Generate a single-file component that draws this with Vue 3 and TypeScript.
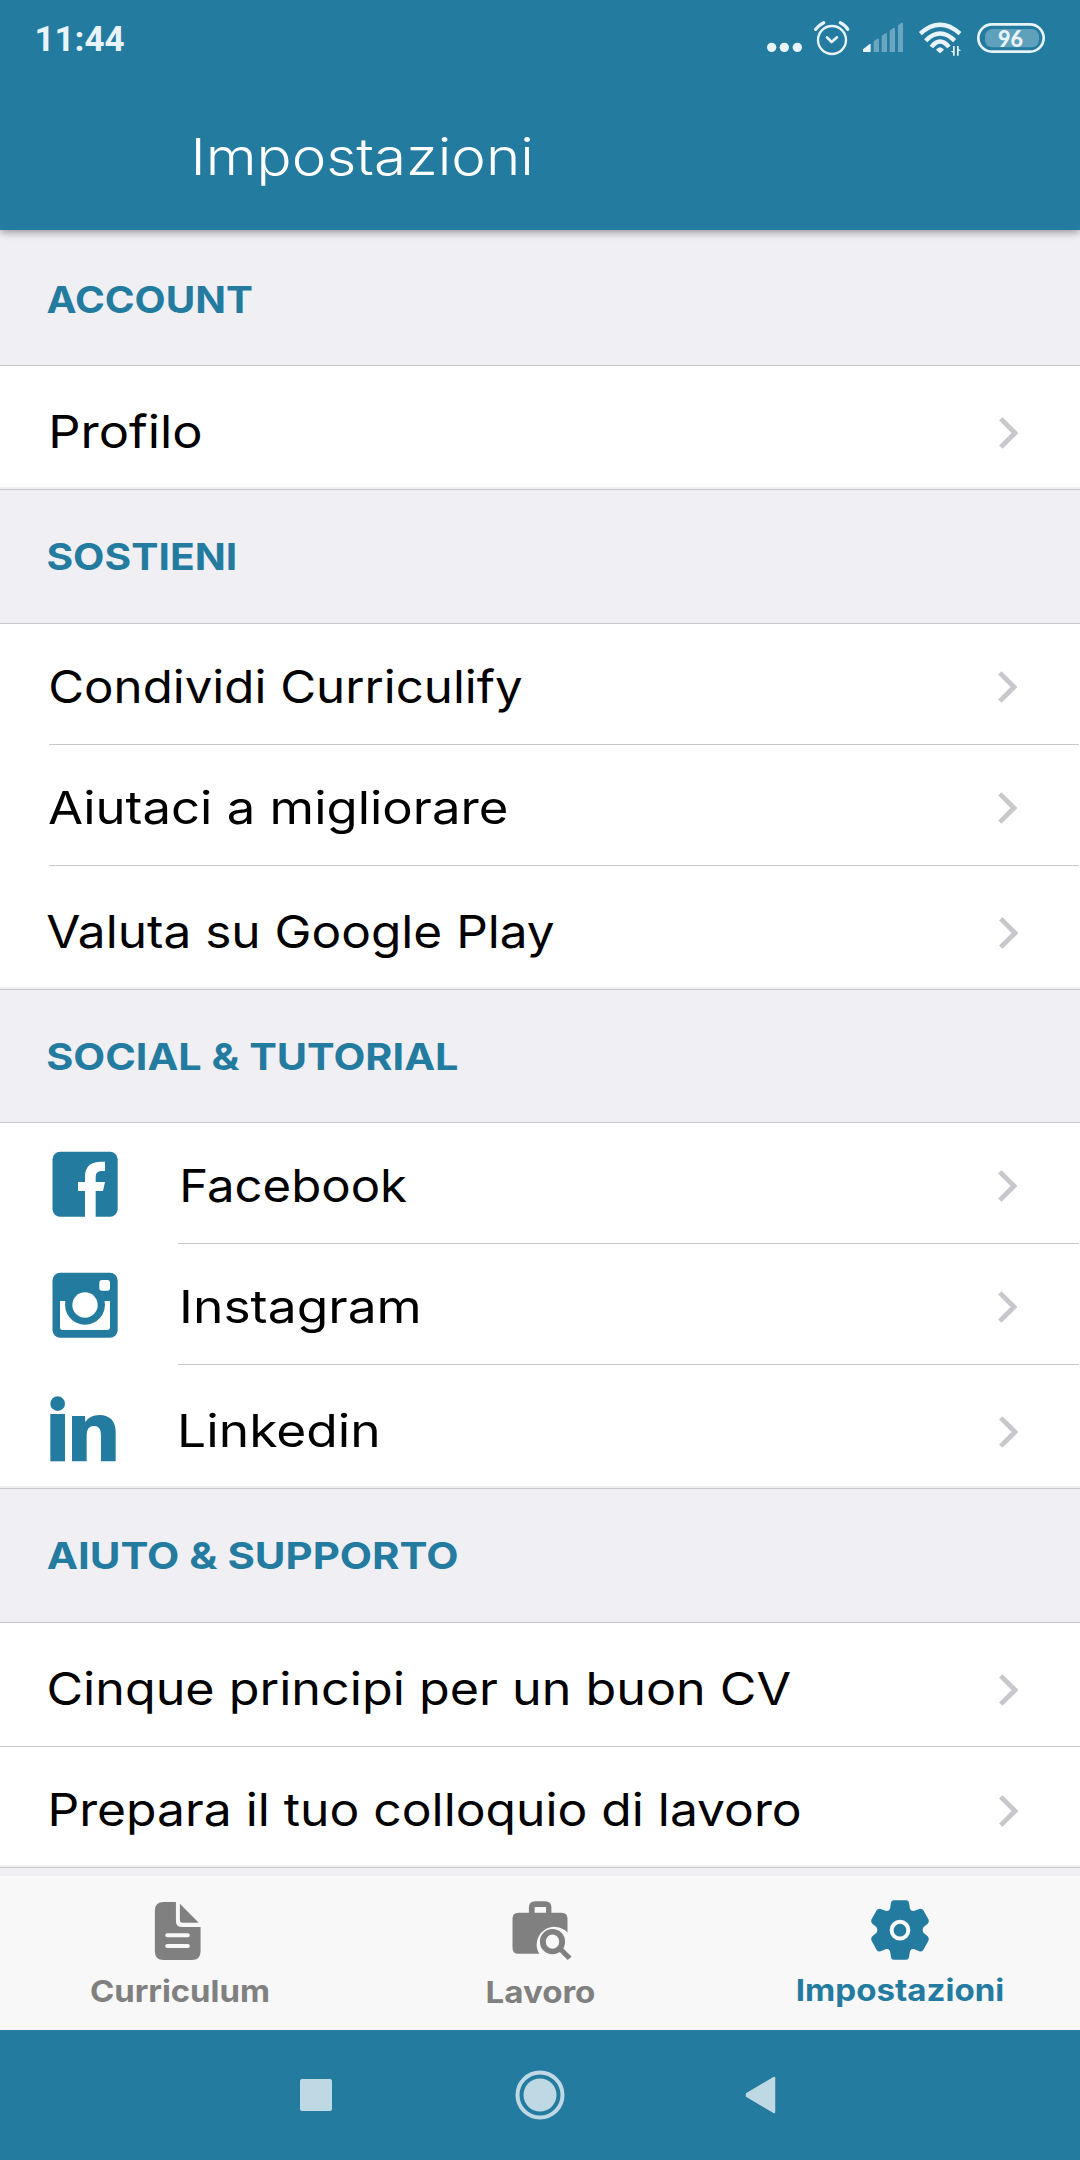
<script setup lang="ts">
interface Row {
  label: string
  x: number
  width: number
  icon?: 'facebook' | 'instagram' | 'linkedin'
  low?: boolean
  shifted?: boolean
  tall?: boolean
  end?: boolean
  full?: boolean
}

interface Section {
  title: string
  x: number
  width: number
  first?: boolean
  short?: boolean
  rows: Row[]
}

const FAMILY = 'Inter, "Open Sans", sans-serif'
const ROW_FONT = `400 45.5px ${FAMILY}`
const HEAD_FONT = `700 37.2px ${FAMILY}`
const TITLE_FONT = `350 51px ${FAMILY}`
const TAB_FONT = `700 30.4px ${FAMILY}`
const CLOCK_FONT = '700 35px Roboto, sans-serif'

const ctx = document.createElement('canvas').getContext('2d')!

/* Stretches a label to its designed width and aligns its visible left edge. */
function fit(text: string, font: string, x: number, width: number) {
  ctx.font = font
  const m = ctx.measureText(text)
  const ink = m.actualBoundingBoxLeft + m.actualBoundingBoxRight
  const k = width / ink
  const dx = x + m.actualBoundingBoxLeft * k
  return { font, lineHeight: '60px', transform: `translateX(${dx.toFixed(2)}px) scaleX(${k.toFixed(4)})` }
}

const sections: Section[] = [
  {
    title: 'ACCOUNT', x: 46.5, width: 205.5, first: true,
    rows: [{ label: 'Profilo', x: 51.5, width: 148.5, low: true, shifted: true, end: true }],
  },
  {
    title: 'SOSTIENI', x: 47.5, width: 187,
    rows: [
      { label: 'Condividi Curriculify', x: 50.3, width: 471.7 },
      { label: 'Aiutaci a migliorare', x: 49, width: 457.7 },
      { label: 'Valuta su Google Play', x: 47.3, width: 506.8, low: true, shifted: true, end: true },
    ],
  },
  {
    title: 'SOCIAL & TUTORIAL', x: 47.3, width: 410, short: true,
    rows: [
      { label: 'Facebook', x: 182.5, width: 224.5, icon: 'facebook' },
      { label: 'Instagram', x: 182.5, width: 236, icon: 'instagram' },
      { label: 'Linkedin', x: 180.5, width: 197, icon: 'linkedin', low: true, shifted: true, end: true },
    ],
  },
  {
    title: 'AIUTO & SUPPORTO', x: 46.7, width: 410,
    rows: [
      { label: 'Cinque principi per un buon CV', x: 48.6, width: 742.2, low: true, shifted: true, tall: true, full: true },
      { label: 'Prepara il tuo colloquio di lavoro', x: 50.7, width: 748.5, shifted: true, end: true },
    ],
  },
]
</script>

<template>
  <div class="screen">
    <header class="top">
      <div class="status">
        <span class="clock"><span class="fit" :style="fit('11:44', CLOCK_FONT, 36.5, 88)">11:44</span></span>
        <svg class="status-icons" viewBox="0 0 1020 240" fill="none" stroke-linecap="round">
          <g fill="#e9f4fa">
            <circle cx="95" cy="142" r="14" /><circle cx="133" cy="142" r="14" /><circle cx="172" cy="142" r="14" />
          </g>
          <g stroke="#e9f4fa">
            <circle cx="276" cy="120" r="42" stroke-width="7" />
            <path d="M261 112L275 126L291 112" stroke-width="8" stroke-linejoin="round" />
            <path d="M227 88Q236 75 251 68M301 68Q316 75 323 88" stroke-width="10" />
          </g>
          <path d="M369 156V148L389 132H392V156Z" fill="#e9f4fa" />
          <path d="M401 156V124L412 116H417V156ZM425 156V108L436 100H441V156ZM449 156V92L460 84H465V156ZM474 156V76L485 68H489V156Z" fill="#e9f4fa" opacity=".36" />
          <g stroke="#e9f4fa" stroke-width="13" stroke-linecap="butt">
            <path d="M541 101Q600 48 660 101" />
            <path d="M557 122Q600 79 644 122" />
            <path d="M574 141Q600 108 627 141" />
          </g>
          <path d="M588 149Q600 134 612 149L604 157Q600 161 596 157Z" fill="#e9f4fa" />
          <path d="M639 138H644V167H639V158L632 153H639ZM651 167V138H656V147L664 152H656V167Z" fill="#e9f4fa" />
          <rect x="715" y="73" width="196" height="82" rx="41" stroke="#e9f4fa" stroke-width="8" />
          <rect x="735" y="87" width="162" height="55" rx="22" fill="#e9f4fa" opacity=".3" />
          <text x="774" y="140" class="charge" textLength="75" lengthAdjust="spacingAndGlyphs">96</text>
        </svg>
      </div>
      <h1 class="title"><span class="fit" :style="fit('Impostazioni', TITLE_FONT, 195, 335.5)">Impostazioni</span></h1>
    </header>

    <main class="content">
      <section v-for="s in sections" :key="s.title">
        <h2 class="head" :class="{ first: s.first, short: s.short }">
          <span class="fit" :style="fit(s.title, HEAD_FONT, s.x, s.width)">{{ s.title }}</span>
        </h2>
        <div
          v-for="r in s.rows"
          :key="r.label"
          class="row"
          :class="{ low: r.low, shifted: r.shifted, tall: r.tall, end: r.end, full: r.full, iconic: r.icon }"
        >
          <div class="line">
            <div class="icon-slot">
              <svg v-if="r.icon === 'facebook'" class="social" viewBox="144 111 216 216">
                <rect x="157.500" y="125" width="195.500" height="195" rx="23" fill="#247ba0" />
                <path d="M315 155V183H304Q287 183 287 201V216H315L309 243H287V321H255V243H234V216H255V198Q256 155 304 155Z" fill="#fff" />
              </svg>
              <svg v-else-if="r.icon === 'instagram'" class="social" viewBox="144 474 216 216">
                <rect x="157.500" y="488" width="195.500" height="195" rx="23" fill="#247ba0" />
                <rect x="298" y="510" width="32" height="32" rx="8" fill="#fff" />
                <circle cx="255" cy="585" r="38" fill="#fff" />
                <path d="M180 573H196A60 60 0 1 0 314 573H330V652Q330 660 322 660H188Q180 660 180 652Z" fill="#fff" />
              </svg>
              <svg v-else-if="r.icon === 'linkedin'" class="social" viewBox="144 849 216 216" fill="#247ba0">
                <circle cx="173" cy="881" r="22" />
                <rect x="151" y="912" width="44" height="142" />
                <path d="M216 918H255L256 936Q270 915 298 915Q347 916 347 968V1054H303V975Q303 948 282 948Q260 948 260 975V1054H216Z" />
              </svg>
            </div>
            <span class="label"><span class="fit" :style="fit(r.label, ROW_FONT, r.x, r.width)">{{ r.label }}</span></span>
            <svg class="chevron" viewBox="0 0 19 32"><path d="M1.800 1.900L16 16L1.800 30.100" fill="none" stroke="#c7c7cc" stroke-width="4.800" /></svg>
          </div>
        </div>
      </section>
    </main>

    <nav class="tabs">
      <div class="tab">
        <svg class="doc" viewBox="258 90 140 186" preserveAspectRatio="none" fill="#808080">
          <path d="M290 96H325V152Q325 171 342 171H394V244Q394 270 370 270H290Q266 270 266 244V122Q266 96 290 96Z" />
          <path d="M336 101L389 158H344Q336 158 336 149Z" />
          <path d="M301 196H358M301 228H358" stroke="#f8f8f8" stroke-width="12" stroke-linecap="round" />
        </svg>
        <span class="tab-label"><span class="fit" :style="fit('Curriculum', TAB_FONT, 91, 177)">Curriculum</span></span>
      </div>
      <div class="tab">
        <svg class="case" viewBox="1260 90 182 186" preserveAspectRatio="none" fill="#808080">
          <path fill-rule="evenodd" d="M1283 128H1313V112Q1313 94 1331 94H1358Q1376 94 1376 112V128H1405Q1421 128 1421 146V187A50 53 0 0 0 1342 251H1283Q1267 251 1267 233V146Q1267 128 1283 128ZM1329 111V128H1361V111Z" />
          <ellipse cx="1379" cy="215" rx="27" ry="29.500" fill="none" stroke="#808080" stroke-width="16.500" />
          <path d="M1402 238L1427 265" stroke="#808080" stroke-width="15" />
        </svg>
        <span class="tab-label low-label"><span class="fit" :style="fit('Lavoro', TAB_FONT, 127.7, 107)">Lavoro</span></span>
      </div>
      <div class="tab active">
        <svg class="gear" viewBox="327 114 186 192" fill="#247ba0">
          <path d="M402 121H438Q446 121 447 129L450 146Q453 154 461 153L478 147Q486 145 490 151L506 179Q508 186 503 191L491 201Q485 210 491 219L503 229Q508 234 506 241L490 270Q486 276 478 274L461 267Q453 266 450 274L447 291Q446 299 438 299H402Q394 299 393 291L390 274Q387 266 379 267L362 274Q354 276 350 270L334 241Q332 234 337 229L349 219Q355 210 349 201L337 191Q332 186 334 179L350 151Q354 145 362 147L379 153Q387 154 390 146L393 129Q394 121 402 121Z" />
          <circle cx="420" cy="210.500" r="25" fill="none" stroke="#f8f8f8" stroke-width="12" />
        </svg>
        <span class="tab-label high-label"><span class="fit" :style="fit('Impostazioni', TAB_FONT, 78, 205)">Impostazioni</span></span>
      </div>
    </nav>

    <footer class="system">
      <svg width="32" height="32" viewBox="0 0 32 32"><rect width="32" height="32" rx="2" fill="#bed8e4" /></svg>
      <svg class="home" width="50" height="50" viewBox="0 0 50 50">
        <circle cx="25" cy="25" r="22.500" fill="none" stroke="#bed8e4" stroke-width="4" />
        <circle cx="25" cy="25" r="16.500" fill="#bed8e4" />
      </svg>
      <svg width="32" height="38" viewBox="0 0 32 38"><path d="M2 18L29 2V36L2 20Z" fill="#bed8e4" stroke="#bed8e4" stroke-width="2.500" stroke-linejoin="round" /></svg>
    </footer>
  </div>
</template>

<style>
body {
  margin: 0;
}
</style>

<style scoped>
.screen {
  width: 1080px;
  height: 2160px;
  display: flex;
  flex-direction: column;
  overflow: hidden;
  background: #efeff4;
  color: #000;
  font-family: Inter, "Open Sans", sans-serif;
}
.fit {
  display: block;
  width: max-content;
  white-space: nowrap;
  transform-origin: 0 50%;
}
.top {
  position: relative;
  flex: none;
  height: 230px;
  background: #247ba0;
  color: #fff;
  box-shadow: 0 2px 8px rgba(0, 0, 0, 0.4);
}
.status {
  display: flex;
  justify-content: space-between;
  height: 80px;
}
.clock {
  width: 200px;
  padding-top: 9.500px;
  color: #e9f4fa;
}
.status-icons {
  width: 340px;
  height: 80px;
}
.charge {
  font: 900 69px Lato, sans-serif;
  fill: #e9f4fa;
}
.title {
  margin: 0;
  padding-top: 46.500px;
}
.content {
  flex: none;
  height: 1646px;
}
.head {
  box-sizing: border-box;
  height: 134px;
  margin: 0;
  padding-top: 37px;
  border-bottom: 1px solid #c8c7cc;
  color: #247ba0;
}
.head.first {
  height: 136px;
  padding-top: 39.500px;
}
.head.short {
  height: 133px;
}
.row {
  box-sizing: border-box;
  height: 121px;
  background: #fff;
}
.line {
  box-sizing: border-box;
  display: flex;
  height: 100%;
  margin: 0 1px 0 49px;
  border-bottom: 1px solid #c8c7cc;
}
.iconic .line {
  margin-left: 178px;
}
.row.end {
  height: 124px;
}
.row.tall {
  height: 124px;
}
.tall + .row.end {
  height: 121px;
}
.end .line,
.full .line {
  margin: 0;
}
.end .line {
  box-shadow: inset 0 -2px #efeff0;
}
.icon-slot {
  flex: none;
  width: 0;
  margin-left: -49px;
}
.iconic .icon-slot {
  margin-left: -178px;
}
.end .icon-slot,
.full .icon-slot {
  margin-left: 0;
}
.social {
  display: block;
  width: 72px;
  height: 72px;
  margin: 24px 0 0 48px;
}
.low .social {
  margin-top: 28px;
}
.label {
  flex: 0 0 998px;
  width: 998px;
  padding-top: 32.500px;
}
.low .label {
  padding-top: 35.500px;
}
.shifted .label {
  flex-basis: 999px;
}
.chevron {
  flex: none;
  width: 19px;
  height: 32px;
  margin-top: 47px;
}
.shifted .chevron {
  margin-top: 48px;
}
.low .chevron {
  margin-top: 51px;
}
.tabs {
  flex: none;
  display: flex;
  height: 154px;
  background: #f8f8f8;
  color: #808080;
}
.tab {
  display: flex;
  flex-direction: column;
  width: 360px;
}
.active {
  color: #247ba0;
}
.doc {
  width: 50px;
  height: 62px;
  margin: 24px 0 0 152px;
}
.case {
  width: 65px;
  height: 62px;
  margin: 24px 0 0 150px;
}
.gear {
  width: 62px;
  height: 64px;
  margin: 22px 0 0 149px;
}
.tab-label {
  height: 60px;
  margin-top: -1px;
}
.low-label {
  margin-top: 0;
}
.high-label {
  margin-top: -2px;
}
.system {
  flex: 1;
  display: flex;
  align-items: center;
  justify-content: space-between;
  padding: 0 303px 0 300px;
  background: #247ba0;
}
.home {
  margin-left: 3px;
}
</style>
